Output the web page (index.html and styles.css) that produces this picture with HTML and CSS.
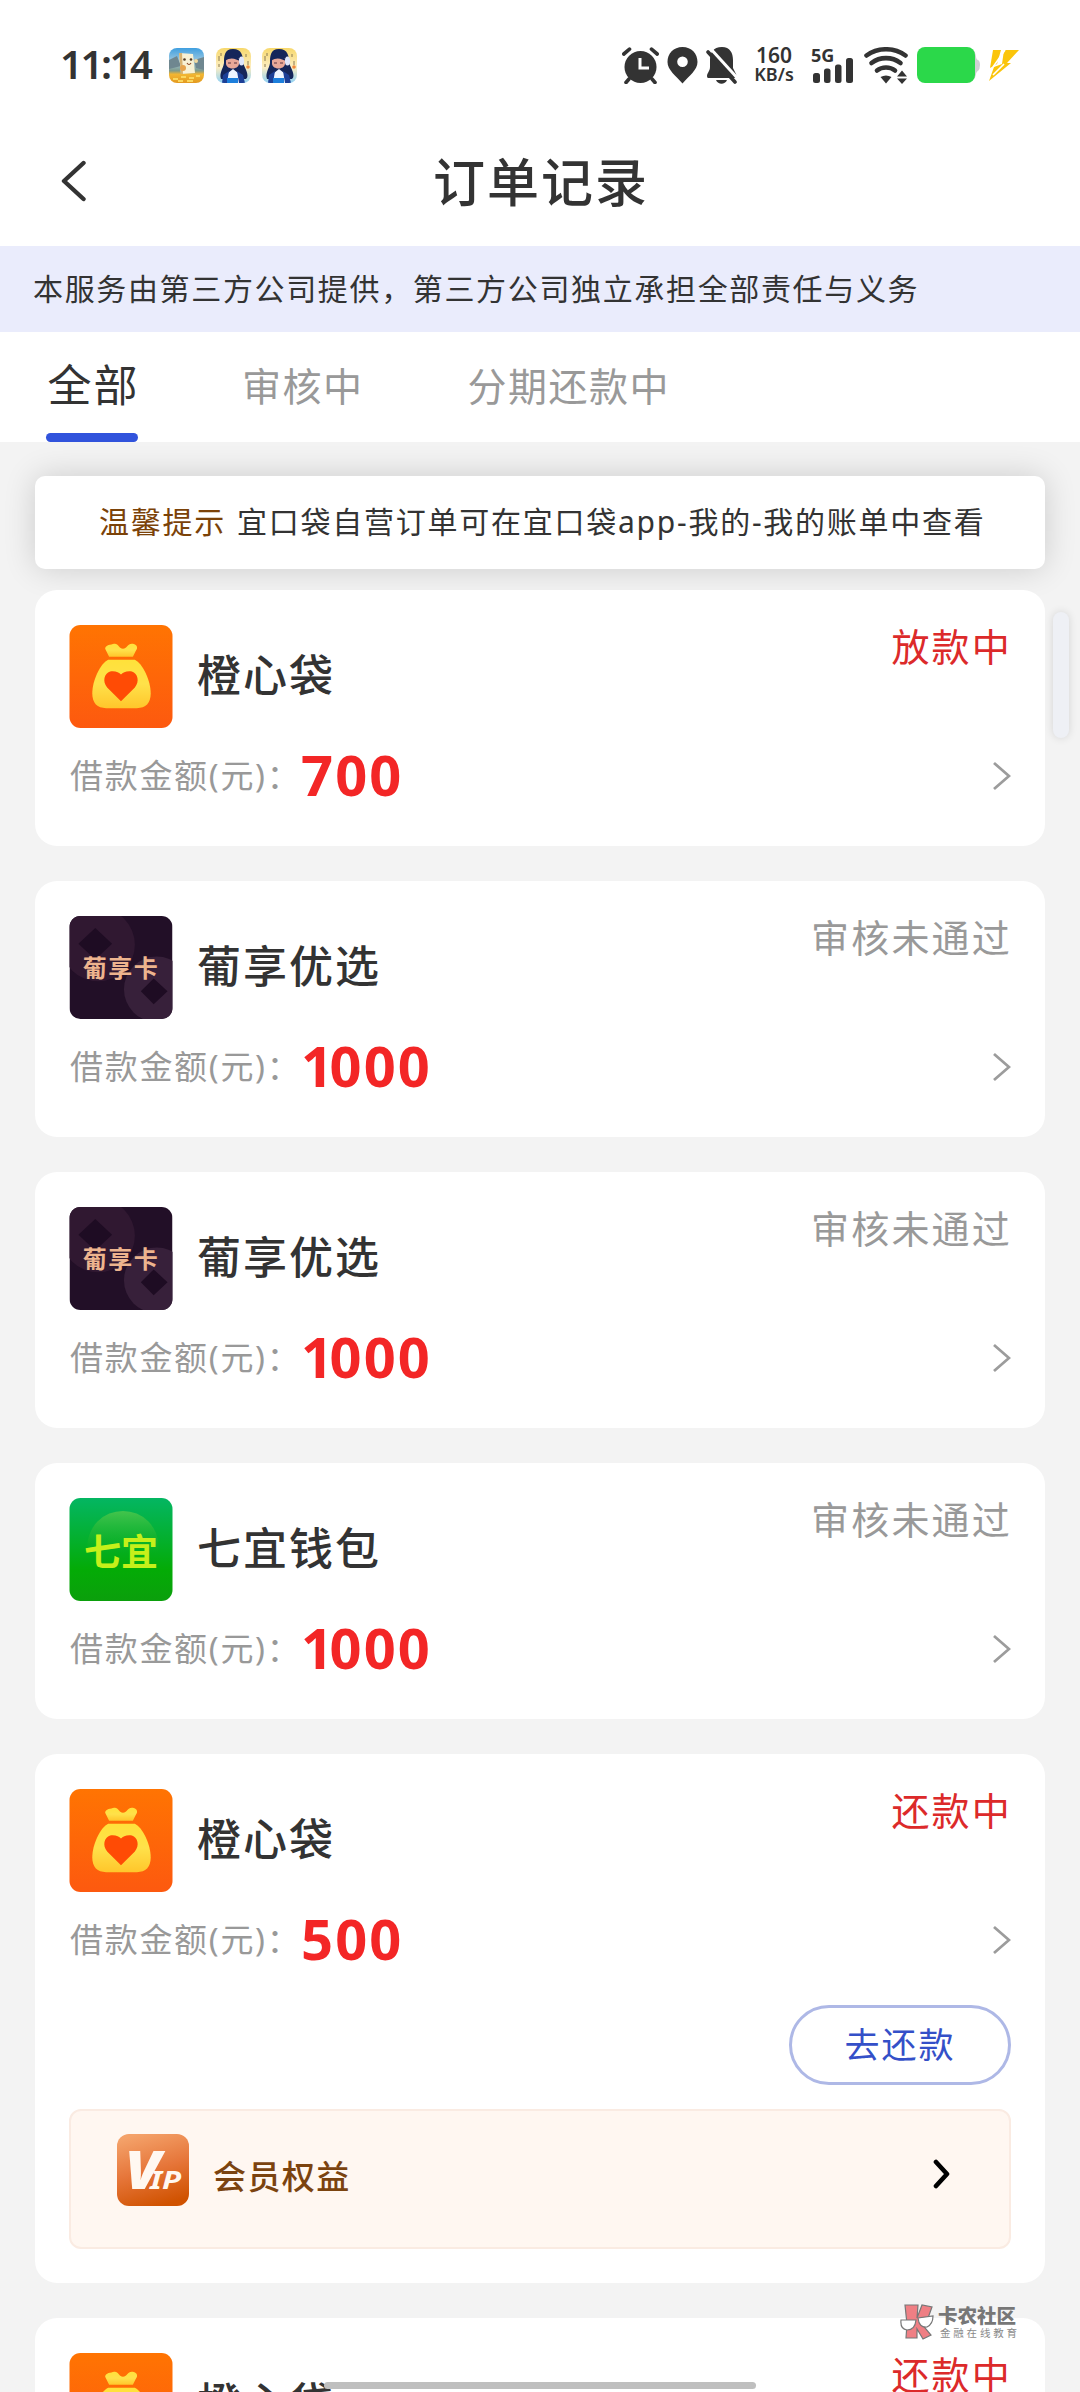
FILE: index.html
```html
<!DOCTYPE html>
<html lang="zh-CN">
<head>
<meta charset="utf-8">
<title>订单记录</title>
<link rel="stylesheet" href="styles.css">
</head>
<body>
<svg class="defs" width="0" height="0" aria-hidden="true">
  <defs>
    <linearGradient id="g-orange" x1="0" y1="0" x2="0" y2="1"><stop offset="0" stop-color="#ff7402"/><stop offset="1" stop-color="#fd590f"/></linearGradient>
    <linearGradient id="g-yellow" x1="0" y1="0" x2="0" y2="1"><stop offset="0" stop-color="#ffe13a"/><stop offset=".5" stop-color="#ffe14a"/><stop offset="1" stop-color="#ffc62b"/></linearGradient>
    <linearGradient id="g-green" x1="0" y1="0" x2="0" y2="1"><stop offset="0" stop-color="#04b662"/><stop offset=".7" stop-color="#04ab06"/><stop offset="1" stop-color="#0b9f0c"/></linearGradient>
    <linearGradient id="g-dome" x1="0" y1="0" x2="0" y2="1"><stop offset="0" stop-color="#44c44c"/><stop offset=".6" stop-color="#18b01c" stop-opacity="0"/></linearGradient>
    <linearGradient id="g-vip" x1=".3" y1="0" x2=".6" y2="1"><stop offset="0" stop-color="#f4a26a"/><stop offset=".5" stop-color="#e6763a"/><stop offset="1" stop-color="#d05200"/></linearGradient>
    <linearGradient id="g-sky" x1="0" y1="0" x2="0" y2="1"><stop offset="0" stop-color="#3f9fe0"/><stop offset=".4" stop-color="#a3cbe0"/><stop offset=".65" stop-color="#7f9a8a"/><stop offset=".75" stop-color="#f2b632"/><stop offset="1" stop-color="#e39a20"/></linearGradient>
    <linearGradient id="g-song" x1="0" y1="0" x2="0" y2="1"><stop offset="0" stop-color="#f7d86b"/><stop offset=".55" stop-color="#fdeec2"/><stop offset="1" stop-color="#8fd0f4"/></linearGradient>
    <symbol id="bag" viewBox="0 0 104 104">
      <rect width="104" height="104" rx="11" fill="url(#g-orange)"/>
      <path d="M40 32 36 24C36 20 42 20 45 19C49 18 50 24 54 24C58 24 59 18 64 19C69 20 69 24 67 26L64 32Z" fill="url(#g-yellow)"/>
      <path d="M39 35H66C74 39 82 56 82 69C82 79 77 84 68 84H37C28 84 23 79 23 69C23 56 31 39 39 35Z" fill="url(#g-yellow)"/>
      <path d="M52 77 38 63C33 57 35 49 41 47C46 46 50 48 52 50C54 48 58 46 63 47C69 49 71 57 66 63Z" fill="#ff4b05"/>
    </symbol>
    <symbol id="grape" viewBox="0 0 104 104">
      <clipPath id="c-grape"><rect width="104" height="104" rx="11"/></clipPath>
      <g clip-path="url(#c-grape)">
        <rect width="104" height="104" fill="#220f27"/>
        <circle cx="29" cy="29" r="37" fill="#301831"/>
        <circle cx="88" cy="74" r="33" fill="#37203a"/>
        <path d="M26 12 43 28 26 44 9 28Z" fill="#1e0c23"/>
        <path d="M85 63 99 76 85 89 72 76Z" fill="#1e0c23"/>
      </g>
    </symbol>
    <symbol id="seven" viewBox="0 0 104 104">
      <rect width="104" height="104" rx="11" fill="url(#g-green)"/>
      <circle cx="54" cy="49" r="36" fill="url(#g-dome)"/>
    </symbol>
    <symbol id="next" viewBox="0 0 20 30"><path d="M3 2 18 15 3 28" fill="none" stroke="#9c9c9c" stroke-width="2.800"/></symbol>
    <symbol id="game-singer" viewBox="0 0 35 35">
      <clipPath id="c-singer"><rect width="35" height="35" rx="8"/></clipPath>
      <g clip-path="url(#c-singer)">
        <rect width="35" height="35" fill="url(#g-song)"/>
        <path d="M3 8v5M5 5v3M30 6v3M32 13v4M3 16v3" stroke="#8a7a52" stroke-width="1"/>
        <path d="M17 1C8 1 8 9 8 15C7 21 3 25 5 31H30C34 28 29 20 27 15C27 8 26 1 17 1Z" fill="#15265a"/>
        <path d="M10 10H23V16C22 22 11 22 10 16Z" fill="#e9a898"/>
        <path d="M9 13C10 5 22 5 24 13C20 12 16 8 9 13Z" fill="#15265a"/>
        <path d="M12 15h3M18 15h3" stroke="#5b3540" stroke-width="1"/>
        <ellipse cx="25.500" cy="13" rx="2.600" ry="4.500" fill="#dfe6fb"/>
        <path d="M10 35 12 25 17 21 22 25 24 35Z" fill="#eef5ff"/>
        <path d="M7 27 13 23 11 35H6ZM21 23 27 27 29 35H23Z" fill="#1c3f96"/>
        <path d="M11 35V30H22V35Z" fill="#1d7fdc"/>
        <circle cx="32" cy="19" r="1.800" fill="#f08a3c"/>
      </g>
    </symbol>
  </defs>
</svg>

<div class="screen">
  <header class="status-bar">
    <div class="status-left">
      <span class="clock">11:14</span>
      <div class="app-badges">
        <svg width="35" height="35" viewBox="0 0 35 35">
          <clipPath id="c-tofu"><rect width="35" height="35" rx="8"/></clipPath>
          <g clip-path="url(#c-tofu)">
            <rect width="35" height="35" fill="url(#g-sky)"/>
            <path d="M0 12 8 8 12 18 0 21ZM25 12 35 9V22L27 20Z" fill="#6f8790"/>
            <path d="M10 5 24 6 26 25 12 26Z" fill="#f8f1d4"/>
            <path d="M10 5 13 5 14 26 12 26Z" fill="#d7b271"/>
            <circle cx="15.500" cy="11.500" r="1.300" fill="#533a25"/><circle cx="22" cy="11.500" r="1.300" fill="#533a25"/>
            <path d="M18 15Q20 18 22 15" stroke="#8b4727" stroke-width="1.200" fill="none"/>
            <circle cx="14" cy="20" r="3" fill="#e6a34c"/><circle cx="27" cy="13" r="2" fill="#f0d9a0"/>
            <path d="M4 31h5M12 29h5M20 30h5M27 28h4M9 33h5M18 33h6" stroke="#fbd75e" stroke-width="2"/>
          </g>
        </svg>
        <svg width="35" height="35"><use href="#game-singer"/></svg>
        <svg width="35" height="35"><use href="#game-singer"/></svg>
      </div>
    </div>
    <div class="status-right">
      <svg class="alarm" width="37" height="37" viewBox="0 0 37 37">
        <circle cx="18.500" cy="20" r="16" fill="#333"/>
        <path d="M7 32 4 35.500M30 32 33 35.500" stroke="#333" stroke-width="3.600" stroke-linecap="round"/>
        <path d="M1.800 7 7.500 2.200M35.200 7 29.500 2.200" stroke="#333" stroke-width="3.600" stroke-linecap="round"/>
        <path d="M18 11V21H27" fill="none" stroke="#fff" stroke-width="3"/>
      </svg>
      <svg class="pin" width="31" height="37" viewBox="0 0 31 37">
        <path fill-rule="evenodd" d="M15.500 0C6.500 0 .5 6.500 .5 15C.5 23 9 29 15.500 36.500C22 29 30.500 23 30.500 15C30.500 6.500 24.500 0 15.500 0ZM15.500 9.500A5.300 5.300 0 1 1 15.500 20.100A5.300 5.300 0 1 1 15.500 9.500Z" fill="#333"/>
      </svg>
      <svg class="bell" width="32" height="37" viewBox="0 0 32 37">
        <path d="M16 0C7 0 4 6 4 13V20C4 24 1 26 1 29C1 31 2 31 3 31H28C30 31 31 29 30 27L27 21V13C27 6 24 0 16 0Z" fill="#333"/>
        <path d="M10 33H21C19 38 12 38 10 33Z" fill="#333"/>
        <path d="M4 1 34 34" stroke="#fff" stroke-width="3"/>
        <path d="M2 5 29 35" stroke="#333" stroke-width="3.600" stroke-linecap="round"/>
      </svg>
      <div class="speed"><span class="speed-num">160</span><span class="speed-unit">KB/s</span></div>
      <div class="signal">
        <span class="net">5G</span>
        <svg width="41" height="26" viewBox="0 0 41 26" fill="#333"><rect x="0" y="16" width="7" height="10" rx="2.500"/><rect x="11" y="11.500" width="6.500" height="14.500" rx="2.500"/><rect x="22" y="7.500" width="6.500" height="18.500" rx="2.500"/><rect x="33" y="1" width="7" height="25" rx="2.500"/></svg>
      </div>
      <svg class="wifi" width="44" height="37" viewBox="0 0 44 37">
        <g fill="none" stroke="#333" stroke-width="4.600" stroke-linecap="round"><path d="M2.500 8.500C14 .2 30 .2 41.500 8.500"/><path d="M7.500 16C16 9.500 28 9.500 36.500 16"/><path d="M13 23.500C18 19.500 26 19.500 31 23.500"/></g>
        <path d="M16.500 30C20 28 24 28 27.500 30L22 36.500Z" fill="#333"/>
        <path d="M33 29.500 38 23.500 43 29.500ZM33 31.500H43L38 37Z" fill="#333"/>
      </svg>
      <svg class="battery" width="64" height="36" viewBox="0 0 64 36">
        <path d="M56 3C60 6 58 12 61 13Q63 14 63 18T61 24C58 25 60 30 56 33Z" fill="#d0d0d2"/>
        <rect width="58" height="36" rx="8" fill="#2bd84a"/>
      </svg>
      <svg class="bolt" width="30" height="31" viewBox="0 0 30 31">
        <path d="M4 0H12L8 14 1 18Z" fill="#fbc50b"/><path d="M15 0H30L18 13H22L0 31L5 17L13 14Z" fill="#fbc50b"/><path d="M16 0 4 17M15 14 4 25" stroke="#fff" stroke-width="1.600"/>
      </svg>
    </div>
  </header>

  <nav class="title-bar">
    <svg class="back" width="26" height="42" viewBox="0 0 26 42"><path d="M23.500 3 4 21 23.500 39" fill="none" stroke="#333" stroke-width="4.400" stroke-linecap="round" stroke-linejoin="round"/></svg>
    <h1 class="title">订单记录</h1>
  </nav>

  <p class="notice">本服务由第三方公司提供，第三方公司独立承担全部责任与义务</p>

  <div class="tabs">
    <span class="tab tab-active">全部</span>
    <span class="tab">审核中</span>
    <span class="tab">分期还款中</span>
  </div>

  <main class="content">
    <div class="tip"><span class="tip-label">温馨提示</span><span>宜口袋自营订单可在宜口袋app-我的-我的账单中查看</span></div>

    <section class="orders">
      <article class="card">
        <div class="card-head"><svg class="logo"><use href="#bag"/></svg><h2 class="name">橙心袋</h2><span class="state state-red">放款中</span></div>
        <div class="amount-row"><span class="label">借款金额(元)：</span><strong class="amount">700</strong><svg class="next"><use href="#next"/></svg></div>
      </article>

      <article class="card">
        <div class="card-head"><div class="logo logo-text"><svg class="logo"><use href="#grape"/></svg><span class="brand-grape">葡享卡</span></div><h2 class="name">葡享优选</h2><span class="state">审核未通过</span></div>
        <div class="amount-row"><span class="label">借款金额(元)：</span><strong class="amount amount-k">1000</strong><svg class="next"><use href="#next"/></svg></div>
      </article>

      <article class="card">
        <div class="card-head"><div class="logo logo-text"><svg class="logo"><use href="#grape"/></svg><span class="brand-grape">葡享卡</span></div><h2 class="name">葡享优选</h2><span class="state">审核未通过</span></div>
        <div class="amount-row"><span class="label">借款金额(元)：</span><strong class="amount amount-k">1000</strong><svg class="next"><use href="#next"/></svg></div>
      </article>

      <article class="card">
        <div class="card-head"><div class="logo logo-text"><svg class="logo"><use href="#seven"/></svg><span class="brand-seven">七宜</span></div><h2 class="name">七宜钱包</h2><span class="state">审核未通过</span></div>
        <div class="amount-row"><span class="label">借款金额(元)：</span><strong class="amount amount-k">1000</strong><svg class="next"><use href="#next"/></svg></div>
      </article>

      <article class="card card-repay">
        <div class="card-head"><svg class="logo"><use href="#bag"/></svg><h2 class="name">橙心袋</h2><span class="state state-red">还款中</span></div>
        <div class="amount-row"><span class="label">借款金额(元)：</span><strong class="amount">500</strong><svg class="next"><use href="#next"/></svg></div>
        <button class="repay">去还款</button>
        <div class="member">
          <svg class="vip" width="72" height="72" viewBox="0 0 72 72">
            <rect width="72" height="72" rx="12" fill="url(#g-vip)"/>
            <g fill="#fff8f1" font-family="Noto Sans, sans-serif" font-weight="900" font-style="italic">
              <text x="8" y="55" font-size="53" textLength="36" lengthAdjust="spacingAndGlyphs">V</text>
              <text x="33" y="55" font-size="25" font-weight="700" textLength="31" lengthAdjust="spacingAndGlyphs">IP</text>
            </g>
          </svg>
          <span class="member-text">会员权益</span>
          <svg class="member-next" width="18" height="30" viewBox="0 0 18 30"><path d="M4 3 15 15 4 27" fill="none" stroke="#000" stroke-width="4.600" stroke-linecap="round" stroke-linejoin="round"/></svg>
        </div>
      </article>

      <article class="card">
        <div class="card-head"><svg class="logo"><use href="#bag"/></svg><h2 class="name">橙心袋</h2><span class="state state-red">还款中</span></div>
      </article>
    </section>
  </main>

  <div class="side-handle"></div>
  <div class="watermark">
    <svg width="34" height="36" viewBox="0 0 34 36">
      <g fill="#ef7f84" stroke="#777" stroke-width="1.200"><path d="M5 1H18L17 14 22 1 32 3 28 14 20 18 31 31 23 35 17 25V34H6L7 20Z"/></g>
      <path d="M1 16Q0 25 7 26Q15 26 16 16ZM18 14Q19 24 27 23Q33 20 33 12Z" fill="#fff" stroke="#777" stroke-width="1.200"/>
    </svg>
    <div class="watermark-text"><span class="watermark-name">卡农社区</span><span class="watermark-sub">金融在线教育</span></div>
  </div>
  <div class="home-bar"></div>
</div>
</body>
</html>
```

FILE: styles.css
```css
* { box-sizing: border-box; }

body {
  margin: 0;
  color: #333;
  background: #fff;
  font-family: "Noto Sans", "Noto Sans CJK SC", sans-serif;
}

h1, h2, p { margin: 0; }
svg { display: block; flex: none; }
.defs { position: absolute; }

.screen {
  position: relative;
  width: 1080px;
  height: 2392px;
  overflow: hidden;
  display: flex;
  flex-direction: column;
}

/* system status bar */
.status-bar {
  flex: none;
  height: 116px;
  padding: 47px 61px 0 60px;
  display: flex;
  justify-content: space-between;
  align-items: flex-start;
}
.status-left { display: flex; align-items: center; height: 36px; }
.clock { width: 109px; padding-bottom: 2px; font-size: 40px; line-height: 34px; font-weight: 600; letter-spacing: -2.400px; }
.app-badges { display: flex; gap: 11.500px; }
.status-right { display: flex; height: 37px; align-items: flex-start; }
.pin { margin-left: 8px; }
.bell { margin-left: 8px; }
.speed {
  width: 46px;
  margin-left: 13px;
  display: flex;
  flex-direction: column;
  align-items: center;
  font-weight: 600;
}
.speed-num { font-size: 21px; line-height: 18px; margin-top: -1px; }
.speed-unit { font-size: 18px; line-height: 20px; }
.signal { width: 41px; margin-left: 16px; display: flex; flex-direction: column; }
.net { font-size: 18px; line-height: 16px; font-weight: 700; height: 10px; margin-left: -2px; }
.wifi { margin-left: 10px; }
.battery { margin-left: 9px; }
.bolt { margin-left: 8px; margin-top: 3px; }

/* page title */
.title-bar { flex: none; height: 130px; padding: 0 60px; display: flex; align-items: center; }
.title {
  flex: 1;
  margin-right: 24px;
  padding-top: 2px;
  text-align: center;
  font-size: 52px;
  line-height: 60px;
  font-weight: 500;
  letter-spacing: 2px;
}

.notice {
  flex: none;
  height: 86px;
  padding-left: 33px;
  line-height: 85px;
  font-size: 30px;
  letter-spacing: 1.650px;
  background: #eaecfc;
  white-space: nowrap;
}

.tabs { flex: none; height: 110px; padding-left: 46px; display: flex; gap: 104px; }
.tab { height: 110px; line-height: 108px; font-size: 39px; letter-spacing: 1.5px; color: #999; }
.tab-active {
  width: 92px;
  font-size: 44px;
  line-height: 107px;
  text-indent: 1.5px;
  letter-spacing: 2px;
  color: #333;
  display: flex;
  flex-direction: column;
  justify-content: space-between;
  white-space: nowrap;
}
.tab-active::after { content: ""; flex: none; height: 9px; margin-top: -9px; border-radius: 5px; background: #3153dc; }

.content { flex: 1; overflow: hidden; padding: 34px 35px 0; background: #f3f3f3; }

.tip {
  height: 93px;
  padding: 0 0 5px 64px;
  display: flex;
  align-items: center;
  gap: 11px;
  border-radius: 10px;
  background: #fff;
  box-shadow: 0 0 32px rgba(0, 0, 0, .16);
  font-size: 30px;
  letter-spacing: 1.750px;
  white-space: nowrap;
}
.tip-label { color: #7b4208; }

/* order list */
.orders { position: relative; margin-top: 21px; display: flex; flex-direction: column; gap: 35px; }
.card { flex: none; height: 256px; padding: 35px 34px 0; border-radius: 22px; background: #fff; }
.card-repay { height: 529px; }
.card-head { height: 103px; display: flex; align-items: flex-start; }
.logo { width: 104px; height: 103px; flex: none; }
.logo-text { display: grid; place-items: center; }
.logo-text > * { grid-area: 1 / 1; }
.brand-grape {
  z-index: 1;
  padding-bottom: 2px;
  font-size: 24px;
  font-weight: 700;
  letter-spacing: 1.5px;
  color: #edb48e;
  white-space: nowrap;
}
.brand-seven {
  z-index: 1;
  font-size: 37px;
  font-weight: 700;
  white-space: nowrap;
  color: #c5f01a;
}
.name { flex: 1; margin-left: 24px; font-size: 44px; line-height: 101px; font-weight: 500; letter-spacing: 2px; }
.state { margin-right: -1px; font-size: 38px; line-height: 43px; letter-spacing: 2.200px; color: #999; }
.state-red { color: #dc2a2a; }
.amount-row { height: 60px; margin-top: 18px; display: flex; align-items: center; }
.label { width: 232px; padding-left: 1px; font-size: 33px; line-height: 58px; letter-spacing: 1.700px; color: #999; white-space: nowrap; }
.amount { flex: 1; height: 60px; font-size: 56px; line-height: 56px; letter-spacing: 2.100px; color: #f32626; }
.amount-k::first-letter { letter-spacing: -3.500px; }
.next { width: 20px; height: 30px; }

.repay {
  display: block;
  width: 222px;
  height: 80px;
  margin: 35px 0 0 auto;
  padding: 0 0 5px;
  border: 3px solid #aeb8e6;
  border-radius: 40px;
  background: #fff;
  color: #3450c8;
  font: inherit;
  font-size: 35px;
  letter-spacing: 2px;
}
.member {
  height: 140px;
  margin-top: 24px;
  padding: 23px 59px 0 46px;
  display: flex;
  border: 2px solid #faebe2;
  border-radius: 12px;
  background: #fff7f1;
}
.member-text { flex: 1; margin-left: 24px; line-height: 86px; font-size: 33px; font-weight: 500; letter-spacing: 1.4px; color: #7b430f; }
.member-next { margin-top: 25px; }

/* overlays */
.side-handle {
  position: absolute;
  left: 1053px;
  top: 612px;
  width: 16px;
  height: 126px;
  border-radius: 8px;
  background: #eef0f5;
  box-shadow: 0 0 8px rgba(0, 0, 0, .13);
}
.watermark { position: absolute; left: 900px; top: 2304px; display: flex; gap: 4px; }
.watermark-text { display: flex; flex-direction: column; white-space: nowrap; }
.watermark-name { font-size: 19.500px; line-height: 23px; font-weight: 900; color: #777; }
.watermark-sub { margin-left: 2px; font-size: 10.500px; line-height: 13px; letter-spacing: 2.800px; color: #8a8a8a; }
.home-bar { position: absolute; left: 324px; top: 2382px; width: 432px; height: 7px; border-radius: 4px; background: #bfbfbf; }
```
